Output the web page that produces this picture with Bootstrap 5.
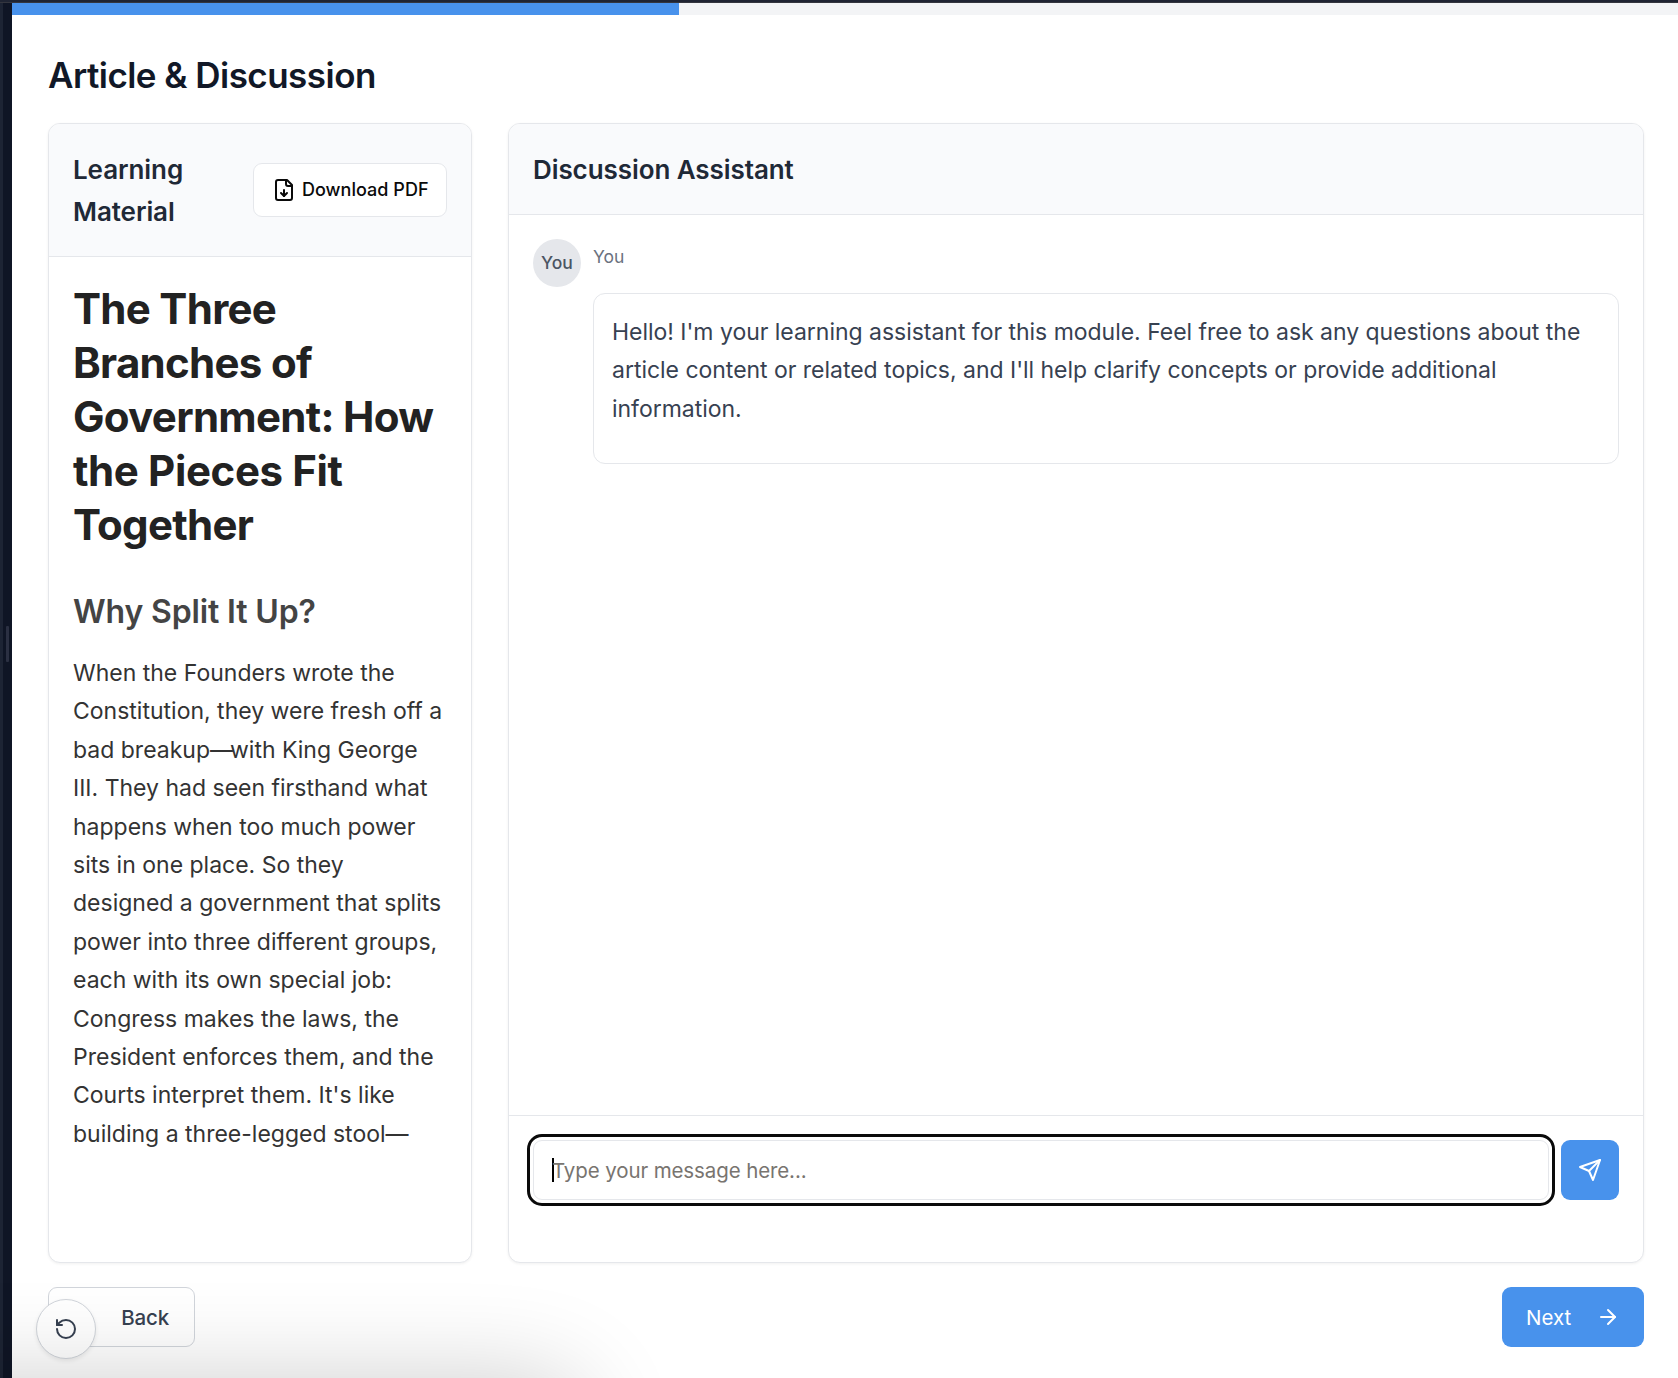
<!DOCTYPE html>
<html lang="en">
<head>
<meta charset="utf-8">
<title>Article &amp; Discussion</title>
<meta name="viewport" content="width=device-width, initial-scale=1">
<link rel="stylesheet" href="https://cdn.jsdelivr.net/npm/bootstrap@5.3.0/dist/css/bootstrap.min.css">
<style>
:root{--line:#e5e7eb;--brand:#4892ec}
body{font-family:Inter,"Liberation Sans",sans-serif;background:#fff;color:#111827;font-size:20.5px;height:1378px}
svg{fill:none;stroke:currentColor;stroke-width:2;stroke-linecap:round;stroke-linejoin:round;flex:none}
.topbar{height:3px;background:#1f2433;border-bottom:1px solid #34363f}
.rail{width:12px;background:#0f1525;border-left:3px solid #1d2434}
.rail-grip{width:3px;height:36px;margin:-94px 3px 0 0;background:#2b3042;border-radius:1px}
.progress{height:12px;border-radius:0;background:#f3f4f6}
.progress-bar{background:var(--brand)}
.page-body{padding:36px 34px 31px 36px}
.page-title{font-size:35px;font-weight:600;letter-spacing:-.53px;line-height:48px;margin:0 0 24px}
.panels{gap:36px}
.panel{border:1px solid var(--line);border-radius:12px;box-shadow:0 1px 3px rgba(0,0,0,.06);overflow:hidden;background:#fff}
.panel-article{width:424px;flex:none}
.panel-head{background:#f9fafc;border-bottom:1px solid var(--line);padding:24px}
.panel-head h2{font-size:26px;font-weight:600;line-height:42px;letter-spacing:-.08px;color:#1f2937;margin:0;padding-top:1px;margin-bottom:-1px}
.btn-pdf{width:194px;height:54px;border:1px solid var(--line);border-radius:9px;background:#fff;color:#0a0a0a;font-size:18px;font-weight:500;letter-spacing:.03px;padding:0 0 0 18px;gap:6px}
.btn-pdf span{padding-bottom:2px}
.article{padding:25px 24px 0}
.article h1{font-size:42px;font-weight:700;line-height:54px;letter-spacing:-.7px;color:#222;margin:0 -8px 39px 0;white-space:nowrap}
.article h1 span{letter-spacing:-.38px}
.article h3{font-size:32px;font-weight:600;line-height:42px;letter-spacing:-.14px;color:#444;margin:0 0 21px}
.article p{font-size:23px;line-height:38.4px;letter-spacing:0;color:#333;margin:0;white-space:nowrap}
.dash{letter-spacing:-3px}
.thread{padding:24px 24px 0;gap:12px}
.avatar{width:48px;height:48px;flex:none;border-radius:50%;background:#e5e7eb;color:#4b5563;font-size:17.5px;font-weight:500}
.sender{font-size:17.5px;line-height:24px;color:#6b7280;margin:6px 0 24px}
.bubble{height:171px;border:1px solid var(--line);border-radius:12px;padding:19px 18px 17px;font-size:23px;line-height:38.4px;letter-spacing:-.025px;color:#374151;white-space:nowrap}
.composer{height:147px;border-top:1px solid var(--line);padding:24px;gap:12px}
.field{height:60px;border:1px solid var(--line);border-radius:9px;outline:3px solid #0a0a0a;outline-offset:3px;padding-left:18px;color:#78746f;letter-spacing:-.11px}
.field-hint{padding-top:2px}
.caret{width:2px;height:24px;background:#000;margin-right:-2px}
.btn-send{width:58px;height:60px;border-radius:9px;background:var(--brand);color:#fff}
.actions{margin-top:24px}
.btn-nav{height:60px;border-radius:9px;font-size:20.5px;line-height:1}
.btn-nav span{padding-top:2px}
.btn-back{width:147px;border:1px solid #d1d5db;color:#374151;font-weight:500;padding:0 25px 0 24px;letter-spacing:-.14px}
.btn-next{width:142px;background:var(--brand);color:#fff;padding:0 24px}
.btn-reset{left:36px;top:1299px;width:60px;height:60px;border-radius:50%;border:1px solid #d1d5db;background:#fff;color:#374151;box-shadow:0 2px 4px rgba(0,0,0,.08)}
.dock-shadow{left:0;bottom:0;width:760px;height:110px;pointer-events:none}
.dock-shadow::after{content:"";position:absolute;left:-200px;top:112px;width:780px;height:200px;border-radius:40px;box-shadow:0 0 100px rgba(0,0,0,.2)}
</style>
</head>
<body class="d-flex flex-column overflow-hidden position-relative">
<div class="topbar flex-shrink-0"></div>
<div class="d-flex flex-grow-1">
  <aside class="rail flex-shrink-0 d-flex align-items-center justify-content-end"><div class="rail-grip"></div></aside>
  <main class="flex-grow-1 d-flex flex-column">
    <div class="progress"><div class="progress-bar" style="width:40.04%"></div></div>
    <div class="page-body flex-grow-1 d-flex flex-column">
      <h1 class="page-title">Article &amp; Discussion</h1>
      <div class="panels d-flex flex-grow-1">
        <section class="panel panel-article">
          <div class="panel-head d-flex align-items-center justify-content-between">
            <h2>Learning<br>Material</h2>
            <button class="btn btn-pdf d-flex align-items-center" type="button">
              <svg width="24" height="24" viewBox="0 0 24 24"><path d="M15 2H6a2 2 0 0 0-2 2v16a2 2 0 0 0 2 2h12a2 2 0 0 0 2-2V7Z"/><path d="M14 2v4a2 2 0 0 0 2 2h4"/><path d="M12 18v-6"/><path d="m9 15 3 3 3-3"/></svg>
              <span>Download PDF</span>
            </button>
          </div>
          <div class="article">
            <h1>The Three<br>Branches of<br>Government: How<br><span>the Pieces Fit</span><br>Together</h1>
            <h3>Why Split It Up?</h3>
            <p>When the Founders wrote the<br>Constitution, they were fresh off a<br>bad breakup<span class="dash">—</span>with King George<br>III. They had seen firsthand what<br>happens when too much power<br>sits in one place. So they<br>designed a government that splits<br>power into three different groups,<br>each with its own special job:<br>Congress makes the laws, the<br>President enforces them, and the<br>Courts interpret them. It's like<br>building a three-legged stool—</p>
          </div>
        </section>
        <section class="panel flex-grow-1 d-flex flex-column">
          <div class="panel-head"><h2>Discussion Assistant</h2></div>
          <div class="thread d-flex align-items-start flex-grow-1">
            <div class="avatar d-flex align-items-center justify-content-center">You</div>
            <div class="flex-grow-1">
              <div class="sender">You</div>
              <div class="bubble">Hello! I'm your learning assistant for this module. Feel free to ask any questions about the<br>article content or related topics, and I'll help clarify concepts or provide additional<br>information.</div>
            </div>
          </div>
          <div class="composer d-flex align-items-start">
            <div class="field flex-grow-1 d-flex align-items-center" role="textbox"><span class="caret"></span><span class="field-hint">Type your message here...</span></div>
            <button class="btn btn-send p-0 border-0 d-flex align-items-center justify-content-center" type="button" aria-label="Send">
              <svg width="24" height="24" viewBox="0 0 24 24"><path d="m22 2-7 20-4-9-9-4Z"/><path d="M22 2 11 13"/></svg>
            </button>
          </div>
        </section>
      </div>
      <div class="actions d-flex justify-content-between">
        <button class="btn btn-nav btn-back d-flex align-items-center justify-content-end" type="button"><span>Back</span></button>
        <button class="btn btn-nav btn-next border-0 d-flex align-items-center justify-content-between" type="button"><span>Next</span>
          <svg width="24" height="24" viewBox="0 0 24 24"><path d="M5 12h14"/><path d="m12 5 7 7-7 7"/></svg>
        </button>
      </div>
    </div>
  </main>
</div>
<button class="btn btn-reset p-0 position-absolute d-flex align-items-center justify-content-center" type="button" aria-label="Reset">
  <svg width="24" height="24" viewBox="0 0 24 24"><path d="M3 12a9 9 0 1 0 9-9 9.75 9.75 0 0 0-6.74 2.74L3 8"/><path d="M3 3v5h5"/></svg>
</button>
<div class="dock-shadow position-absolute overflow-hidden"></div>
<script src="https://cdn.jsdelivr.net/npm/bootstrap@5.3.0/dist/js/bootstrap.bundle.min.js"></script>
</body>
</html>
